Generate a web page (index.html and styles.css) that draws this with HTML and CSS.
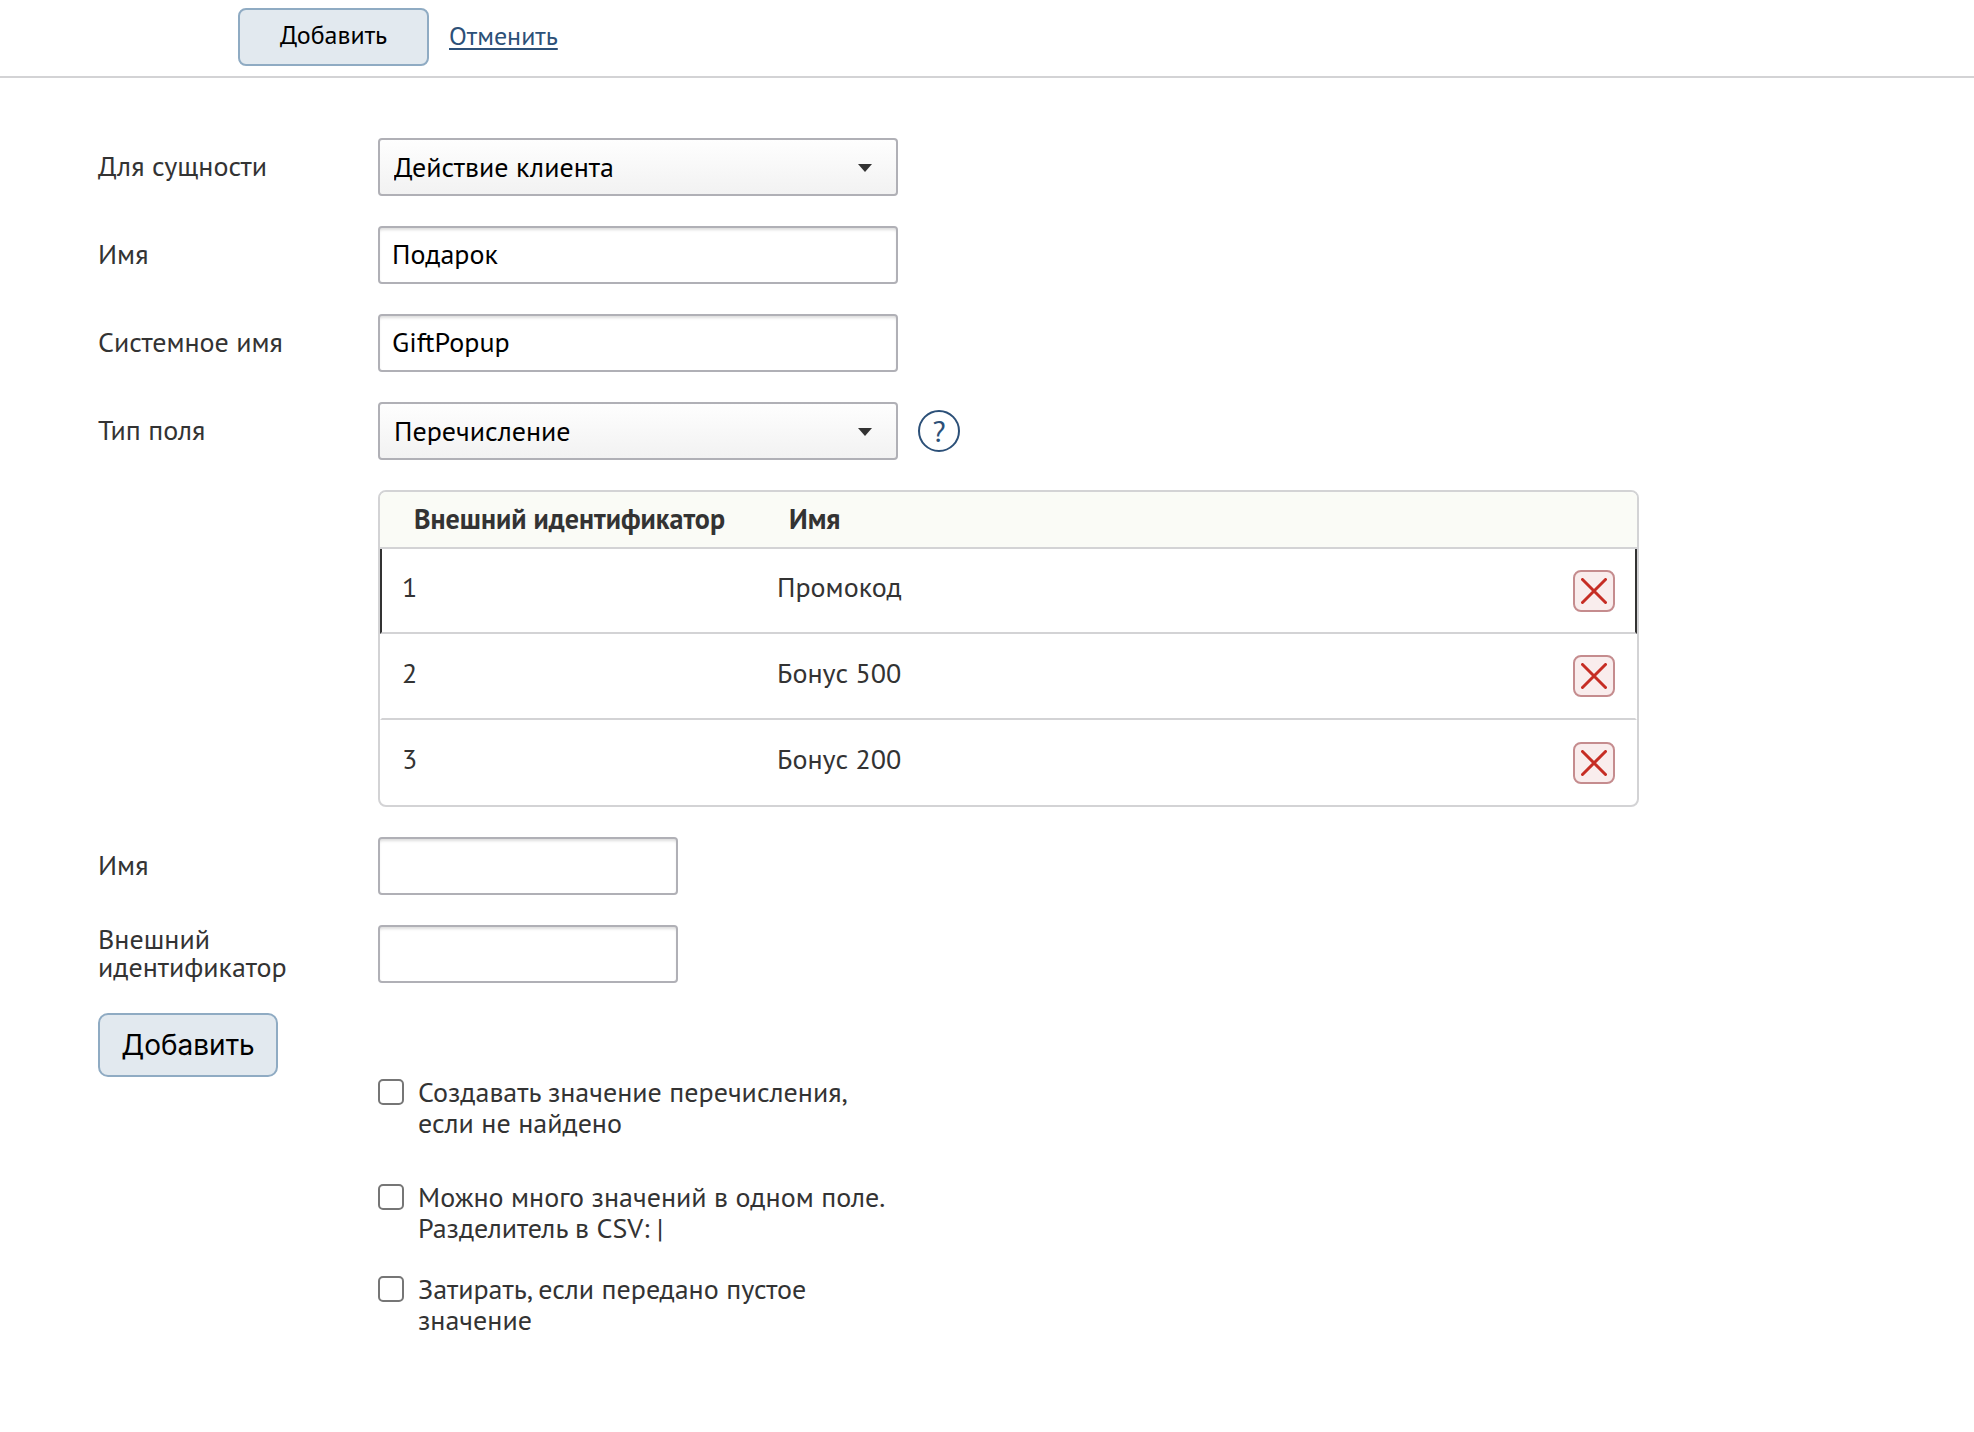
FILE: index.html
```html
<!DOCTYPE html>
<html lang="ru">
<head>
<meta charset="utf-8">
<meta name="viewport" content="width=device-width, initial-scale=1">
<title>Дополнительное поле</title>
<link rel="stylesheet" href="styles.css">
</head>
<body>
<form class="page">
  <header class="toolbar">
    <button type="submit" class="btn btn-submit">Добавить</button>
    <a href="#" class="cancel">Отменить</a>
  </header>

  <main class="form">
    <div class="row">
      <label class="label" for="entity">Для сущности</label>
      <div class="select">
        <select id="entity" class="control"><option>Действие клиента</option></select>
        <svg class="arrow" viewBox="0 0 14 8" aria-hidden="true"><path d="M0 0h14L7 8z"/></svg>
      </div>
    </div>
    <div class="row">
      <label class="label" for="name">Имя</label>
      <input id="name" class="control" type="text" value="Подарок">
    </div>
    <div class="row">
      <label class="label" for="system-name">Системное имя</label>
      <input id="system-name" class="control" type="text" value="GiftPopup">
    </div>
    <div class="row">
      <label class="label" for="type">Тип поля</label>
      <div class="select">
        <select id="type" class="control"><option>Перечисление</option></select>
        <svg class="arrow" viewBox="0 0 14 8" aria-hidden="true"><path d="M0 0h14L7 8z"/></svg>
      </div>
      <button type="button" class="help">?</button>
    </div>

    <table class="values">
      <thead>
        <tr><th class="col-id">Внешний идентификатор</th><th>Имя</th><th class="col-action"></th></tr>
      </thead>
      <tbody>
        <tr class="active">
          <td>1</td><td>Промокод</td>
          <td class="col-action"><button type="button" class="remove" aria-label="Удалить"><svg viewBox="0 0 26 26"><path d="M1.500 1.500l23 23M24.500 1.500l-23 23"/></svg></button></td>
        </tr>
        <tr>
          <td>2</td><td>Бонус 500</td>
          <td class="col-action"><button type="button" class="remove" aria-label="Удалить"><svg viewBox="0 0 26 26"><path d="M1.500 1.500l23 23M24.500 1.500l-23 23"/></svg></button></td>
        </tr>
        <tr>
          <td>3</td><td>Бонус 200</td>
          <td class="col-action"><button type="button" class="remove" aria-label="Удалить"><svg viewBox="0 0 26 26"><path d="M1.500 1.500l23 23M24.500 1.500l-23 23"/></svg></button></td>
        </tr>
      </tbody>
    </table>

    <div class="row">
      <label class="label" for="value-name">Имя</label>
      <input id="value-name" class="control short" type="text">
    </div>
    <div class="row">
      <label class="label" for="value-id">Внешний<br>идентификатор</label>
      <input id="value-id" class="control short" type="text">
    </div>
    <button type="button" class="btn btn-add">Добавить</button>

    <div class="options">
      <label class="option spaced"><input type="checkbox"><span>Создавать значение перечисления,<br>если не найдено</span></label>
      <label class="option"><input type="checkbox"><span>Можно много значений в одном поле.<br>Разделитель в CSV: |</span></label>
      <label class="option"><input type="checkbox"><span>Затирать, если передано пустое<br>значение</span></label>
    </div>
  </main>
</form>
</body>
</html>
```
FILE: styles.css
```css
* { box-sizing: border-box; }

body {
  margin: 0;
  background: #fff;
  color: #333;
  font: 28px/28px "PT Sans", "Noto Sans", sans-serif;
}

button, input, select { margin: 0; font: inherit; color: #000; }

.toolbar {
  display: flex;
  align-items: flex-start;
  gap: 20px;
  height: 78px;
  padding: 8px 0 0 238px;
  border-bottom: 2px solid #d3d3d5;
  font-size: 26px;
}

.btn {
  border: 2px solid #8fabc3;
  background: #e2e9ef;
  cursor: pointer;
}

.btn-submit { width: 191px; height: 58px; padding: 0 0 4px; border-radius: 8px; }

.cancel {
  padding-top: 14px;
  color: #2c5078;
  text-decoration-thickness: 2px;
  text-underline-offset: 3px;
}

.form {
  display: flex;
  flex-direction: column;
  align-items: flex-start;
  gap: 30px;
  padding: 60px 98px;
}

.row { display: flex; align-items: center; }

.label { flex: none; width: 280px; padding-bottom: 2px; }

.control {
  width: 520px;
  height: 58px;
  padding: 0 12px 3px;
  border: 2px solid #b0b0b6;
  border-radius: 4px;
  background: #fff;
}

input.control { box-shadow: inset 0 3px 3px -1px #ddd; }

.control.short { width: 300px; }

.select { position: relative; }

.select .control {
  display: block;
  padding: 0 14px;
  appearance: none;
  background: linear-gradient(#fefefe, #f2f2f2);
}

.arrow {
  position: absolute;
  top: 26px;
  right: 26px;
  width: 14px;
  height: 8px;
  fill: #333;
  pointer-events: none;
}

.help {
  width: 42px;
  height: 42px;
  margin-left: 20px;
  padding: 0;
  border: 2px solid #2c5078;
  border-radius: 50%;
  background: none;
  color: #2c5078;
  font-size: 30px;
}

.values {
  width: calc(100% - 280px);
  max-width: 1261px;
  margin-left: 280px;
  border: 2px solid #d3d3d5;
  border-radius: 8px;
  border-spacing: 0;
  table-layout: fixed;
  overflow: hidden;
}

.values th {
  height: 57px;
  padding: 0 0 2px 34px;
  border-bottom: 2px solid #d3d3d5;
  background: #fafbf6;
  text-align: left;
  white-space: nowrap;
}

.values td {
  height: 86px;
  padding: 0 0 7px 22px;
  border-bottom: 2px solid #d3d3d5;
}

.values .col-id { width: 375px; }
.values .col-action { width: 64px; padding: 0; }
.values td:first-child { border-left: 2px solid transparent; padding-left: 20px; }
.values td:last-child { border-right: 2px solid transparent; }
.values .active td { height: 85px; }
.values .active td:first-child { border-left-color: #333; }
.values .active td:last-child { border-right-color: #333; }
.values tr:last-child td { height: 85px; border-bottom: 0; }

.remove {
  display: grid;
  place-items: center;
  width: 42px;
  height: 42px;
  padding: 0;
  border: 2px solid #c58c8e;
  border-radius: 8px;
  background: #f9eded;
}

.remove svg {
  width: 26px;
  height: 26px;
  fill: none;
  stroke: #c62d24;
  stroke-width: 3;
  stroke-linecap: round;
}

.btn-add {
  width: 180px;
  height: 64px;
  padding: 0;
  border-radius: 10px;
  font: 28px/32px Inter, sans-serif;
}

.options {
  display: flex;
  flex-direction: column;
  gap: 30px;
  margin: -31px 0 0 280px;
  line-height: 31px;
}

.option { display: flex; align-items: flex-start; gap: 14px; }
.option.spaced { margin-bottom: 13px; }

.option input {
  appearance: none;
  flex: none;
  width: 26px;
  height: 26px;
  margin-top: 3px;
  border: 2px solid #767676;
  border-radius: 5px;
  background: #fff;
}
```
